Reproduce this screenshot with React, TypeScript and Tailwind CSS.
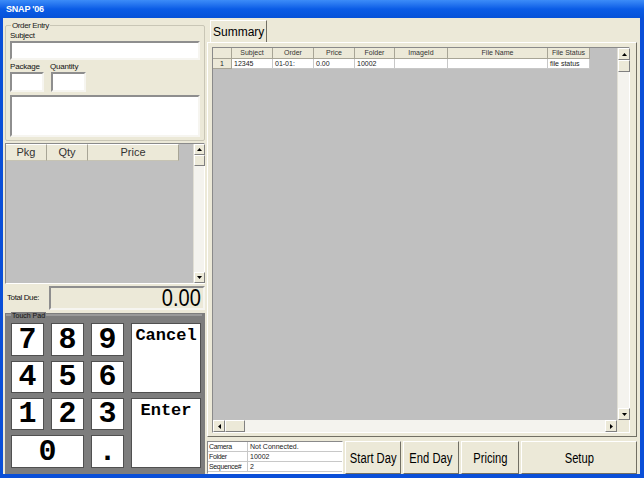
import React from "react";

function Tri({ dir }: { dir: "up" | "down" | "left" | "right" }) {
  const pts =
    dir === "up"
      ? "2.5,0 5,3 0,3"
      : dir === "down"
      ? "0,0 5,0 2.5,3"
      : dir === "left"
      ? "3,0 3,5 0,2.5"
      : "0,0 0,5 3,2.5";
  const w = dir === "up" || dir === "down" ? 5 : 3;
  const h = dir === "up" || dir === "down" ? 3 : 5;
  return (
    <svg width={w} height={h} viewBox={`0 0 ${w} ${h}`}>
      <polygon points={pts} fill="#000" />
    </svg>
  );
}

function ArrowBtn({ dir, size = 12 }: { dir: "up" | "down" | "left" | "right"; size?: number }) {
  return (
    <div
      className={`${size === 11 ? "w-[11px] h-[11px]" : "w-[12px] h-[12px]"} shrink-0 bg-[#ECE9D8] border border-t-white border-l-white border-b-[#808080] border-r-[#808080] flex items-center justify-center`}
    >
      <Tri dir={dir} />
    </div>
  );
}

function VScroll({ narrow }: { narrow?: boolean }) {
  return (
    <div className={`${narrow ? "w-[11px]" : "w-[12px]"} shrink-0 flex flex-col bg-[#F4F3EE] border-l border-[#E0DED4]`}>
      <ArrowBtn dir="up" size={narrow ? 11 : 12} />
      <div className={`${narrow ? "w-[11px] h-[11px]" : "w-[12px] h-[12px]"} bg-[#ECE9D8] border border-t-white border-l-white border-b-[#808080] border-r-[#808080]`} />
      <div className="flex-1" />
      <ArrowBtn dir="down" size={narrow ? 11 : 12} />
    </div>
  );
}

function Sunken({ className, children }: { className: string; children?: React.ReactNode }) {
  return (
    <div className={`border-2 border-t-[#8E8E8E] border-l-[#8E8E8E] border-b-[#F6F5F0] border-r-[#F6F5F0] ${className}`}>
      {children}
    </div>
  );
}

function Key({ label, className }: { label: string; className: string }) {
  return (
    <div
      className={`bg-white border border-[#505050] flex items-center justify-center font-['Liberation_Mono','Courier_New',monospace] font-bold text-[30px] leading-none text-black ${className}`}
    >
      {label}
    </div>
  );
}

function BigKey({ label, className }: { label: string; className: string }) {
  return (
    <div
      className={`bg-white border border-[#505050] flex justify-center pt-[3px] font-['Liberation_Mono','Courier_New',monospace] font-bold text-[17px] leading-[18px] text-black ${className}`}
    >
      {label}
    </div>
  );
}

function LeftColumn() {
  return (
    <div className="w-[202px] ml-px flex flex-col">
      {/* Order Entry */}
      <div className="relative mt-[7px] ml-px w-[200px] h-[116px] border border-[#C9C6B6] rounded-[2px] pl-[4px] pt-[5px]">
        <span className="absolute -top-[6px] left-[5px] bg-[#ECE9D8] px-px text-[8px] leading-[11px] tracking-[-0.4px] text-[#222]">
          Order Entry
        </span>
        <div className="text-[8px] leading-[10px] tracking-[-0.3px] text-[#111]">Subject</div>
        <Sunken className="w-[190px] h-[19px] bg-white" />
        <div className="flex mt-[2px]">
          <div className="w-[40px]">
            <div className="text-[8px] leading-[10px] tracking-[-0.2px] text-[#111]">Package</div>
            <Sunken className="w-[34px] h-[20px] bg-white" />
          </div>
          <div className="w-[40px]">
            <div className="text-[8px] leading-[10px] tracking-[-0.2px] text-[#111]">Quantity</div>
            <Sunken className="ml-px w-[35px] h-[20px] bg-white" />
          </div>
        </div>
        <Sunken className="mt-[3px] w-[190px] h-[42px] bg-white" />
      </div>

      {/* Item list */}
      <div className="mt-[2px] ml-px w-[200px] h-[141px] border border-t-[#8A8A8A] border-l-[#8A8A8A] border-b-white border-r-white flex bg-[#C0C0C0]">
        <div className="flex-1 flex flex-col">
          <div className="h-[17px] flex text-[11px] leading-[15px] text-[#333]">
            <div className="w-[41px] bg-[#ECE9D8] border-r border-b border-r-[#A8A596] border-b-[#C6C3B3] border-t border-t-white text-center">Pkg</div>
            <div className="w-[41px] bg-[#ECE9D8] border-r border-b border-r-[#A8A596] border-b-[#C6C3B3] border-t border-t-white text-center">Qty</div>
            <div className="w-[91px] bg-[#ECE9D8] border-r border-b border-r-[#A8A596] border-b-[#C6C3B3] border-t border-t-white text-center">Price</div>
          </div>
        </div>
        <VScroll narrow />
      </div>

      {/* Total due */}
      <div className="mt-[2px] h-[24px] flex items-center">
        <div className="w-[45px] pl-[3px] text-[8px] leading-[10px] text-[#111] tracking-[-0.4px]">Total Due:</div>
        <Sunken className="w-[156px] h-[24px] bg-[#ECE9D8] flex items-center justify-end pr-[2px]">
          <span className="inline-block origin-right scale-x-[0.87] text-[23px] leading-none text-black">0.00</span>
        </Sunken>
      </div>

      {/* Touch pad */}
      <div className="mt-[3px] ml-px w-[200px] flex-1 bg-[#7D7D7D] relative pt-[10px] pl-[6px]">
        <div className="absolute top-[1px] left-[1px] right-[3px] h-[2px] bg-[#9A9A9A]" />
        <span className="absolute -top-[1px] left-[6px] bg-[#7D7D7D] px-px text-[7px] leading-[8px] text-[#111]">
          Touch Pad
        </span>
        <div className="grid grid-cols-[33px_33px_33px_70px] grid-rows-[33px_32px_32px_33px] gap-x-[7px] gap-y-[5px]">
          <Key label="7" className="" />
          <Key label="8" className="" />
          <Key label="9" className="" />
          <BigKey label="Cancel" className="row-span-2" />
          <Key label="4" className="" />
          <Key label="5" className="" />
          <Key label="6" className="" />
          <Key label="1" className="" />
          <Key label="2" className="" />
          <Key label="3" className="" />
          <BigKey label="Enter" className="row-span-2" />
          <Key label="0" className="col-span-2" />
          <Key label="." className="" />
        </div>
      </div>
    </div>
  );
}

const COLS: { name: string; w: string; val: string }[] = [
  { name: "Subject", w: "w-[41px]", val: "12345" },
  { name: "Order", w: "w-[41px]", val: "01-01:" },
  { name: "Price", w: "w-[41px]", val: "0.00" },
  { name: "Folder", w: "w-[40px]", val: "10002" },
  { name: "ImageId", w: "w-[53px]", val: "" },
  { name: "File Name", w: "w-[100px]", val: "" },
  { name: "File Status", w: "w-[42px]", val: "file status" },
];

function RightColumn() {
  return (
    <div className="w-[430px] ml-px flex flex-col">
      <div className="mt-[2px] h-[22px] flex">
        <div className="ml-[3px] w-[57px] h-[22px] border-t border-l border-t-white border-l-white border-r border-r-[#716F64] flex items-center pl-[2px] text-[12px] text-black">
          Summary
        </div>
      </div>
      <div className="h-[395px] border border-t-white border-l-white border-r-[#716F64] border-b-[#716F64] pt-[4px] pl-[4px]">
        <div className="w-[418px] h-[386px] border border-t-[#8A8A8A] border-l-[#8A8A8A] border-b-white border-r-white flex flex-col">
          <div className="flex-1 flex">
            <div className="flex-1 bg-[#C0C0C0] flex flex-col text-[7px] leading-[10px]">
              <div className="flex h-[11px]">
                <div className="w-[19px] bg-[#ECE9D8] border-r border-b border-[#A8A596]" />
                {COLS.map((c) => (
                  <div key={c.name} className={`${c.w} bg-[#ECE9D8] border-r border-b border-[#A8A596] text-center text-[#333] whitespace-nowrap overflow-hidden`}>
                    {c.name}
                  </div>
                ))}
              </div>
              <div className="flex h-[10px]">
                <div className="w-[19px] bg-[#ECE9D8] border-r border-b border-[#A8A596] text-center leading-[9px] text-[#222]">1</div>
                {COLS.map((c) => (
                  <div key={c.name} className={`${c.w} bg-white border-r border-b border-[#C8C8C8] pl-[2px] leading-[9px] text-[#222] whitespace-nowrap overflow-hidden`}>
                    {c.val}
                  </div>
                ))}
              </div>
            </div>
            <VScroll />
          </div>
          <div className="h-[12px] flex">
            <div className="flex-1 flex bg-[#F4F3EE]">
              <ArrowBtn dir="left" />
              <div className="w-[20px] h-[12px] bg-[#ECE9D8] border border-t-white border-l-white border-b-[#808080] border-r-[#808080]" />
              <div className="flex-1" />
              <ArrowBtn dir="right" />
            </div>
            <div className="w-[12px] bg-[#ECE9D8]" />
          </div>
        </div>
      </div>

      <div className="mt-[4px] h-[33px] flex gap-[2px]">
        <div className="w-[136px] h-[33px] border border-t-[#8A8A8A] border-l-[#8A8A8A] border-b-white border-r-white bg-white text-[7px] leading-[10px] text-[#222]">
          {[
            ["Camera", "Not Connected."],
            ["Folder", "10002"],
            ["Sequence#", "2"],
          ].map(([a, b]) => (
            <div key={a} className="flex h-[10px] border-b border-[#C8C8C8]">
              <div className="w-[40px] pl-[1px] border-r border-[#C8C8C8] whitespace-nowrap overflow-hidden tracking-[-0.35px]">{a}</div>
              <div className="flex-1 pl-[2px] whitespace-nowrap">{b}</div>
            </div>
          ))}
        </div>
        {[
          ["Start Day", "w-[56px]"],
          ["End Day", "w-[56px]"],
          ["Pricing", "w-[58px]"],
          ["Setup", "w-[116px]"],
        ].map(([t, w]) => (
          <div
            key={t}
            className={`${w} h-[33px] bg-[#ECE9D8] border border-t-white border-l-white border-b-[#716F64] border-r-[#716F64] flex items-center justify-center text-black whitespace-nowrap`}
          >
            <span className="inline-block scale-x-[0.8] text-[14px] leading-none">{t}</span>
          </div>
        ))}
      </div>
    </div>
  );
}

export default function App() {
  return (
    <div className="w-[644px] h-[478px] flex flex-col bg-[#0A4FD8] font-['Liberation_Sans',Arial,sans-serif] overflow-hidden">
      <div className="h-[18px] shrink-0 flex items-center pl-[6px] bg-gradient-to-b from-[#3C8CF8] via-[#0A5CE6] to-[#0652D8]">
        <span className="text-white text-[9px] font-bold leading-none tracking-[-0.2px]">SNAP '06</span>
      </div>
      <div className="h-[456px] ml-[3px] mr-[4px] bg-[#ECE9D8] flex">
        <LeftColumn />
        <RightColumn />
      </div>
    </div>
  );
}
